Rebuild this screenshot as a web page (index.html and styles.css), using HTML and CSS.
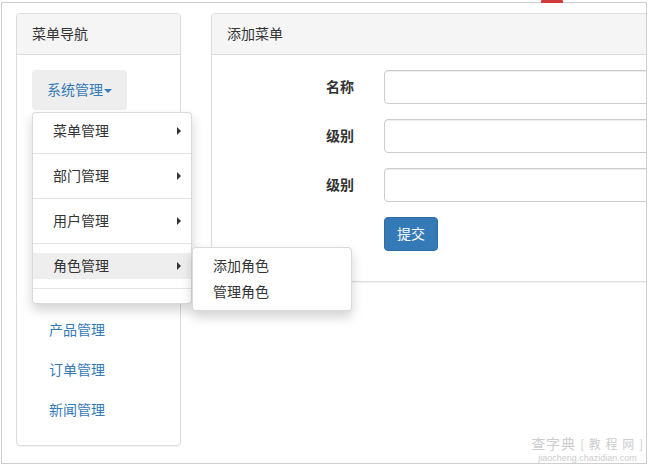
FILE: index.html
```html
<!DOCTYPE html>
<html lang="zh-CN">
<head>
<meta charset="utf-8">
<title>添加菜单</title>
<link rel="stylesheet" href="styles.css">
</head>
<body>
<div class="frame">
  <span class="tab-mark" aria-hidden="true"></span>
  <div class="layout">
    <aside class="panel panel-nav">
      <div class="panel-heading">菜单导航</div>
      <div class="panel-body">
        <ul class="nav">
          <li class="nav-item open">
            <a class="nav-link toggle">系统管理 <span class="caret"></span></a>
            <ul class="dropdown">
              <li class="dd-item"><a>菜单管理</a><span class="caret-right"></span></li>
              <li class="divider"></li>
              <li class="dd-item"><a>部门管理</a><span class="caret-right"></span></li>
              <li class="divider"></li>
              <li class="dd-item"><a>用户管理</a><span class="caret-right"></span></li>
              <li class="divider"></li>
              <li class="dd-item active"><a>角色管理</a><span class="caret-right"></span>
                <ul class="dropdown submenu">
                  <li class="dd-item"><a>添加角色</a></li>
                  <li class="dd-item"><a>管理角色</a></li>
                </ul>
              </li>
              <li class="divider"></li>
            </ul>
          </li>
          <li class="nav-item"><a class="nav-link">产品管理</a></li>
          <li class="nav-item"><a class="nav-link">订单管理</a></li>
          <li class="nav-item"><a class="nav-link">新闻管理</a></li>
        </ul>
      </div>
    </aside>
    <section class="panel panel-main">
      <div class="panel-heading">添加菜单</div>
      <div class="panel-body">
        <form class="form">
          <label class="form-label">名称</label>
          <div class="form-field"><input class="input" type="text"></div>
          <label class="form-label">级别</label>
          <div class="form-field"><input class="input" type="text"></div>
          <label class="form-label">级别</label>
          <div class="form-field"><input class="input" type="text"></div>
          <div></div>
          <div class="form-field"><button class="btn" type="button">提交</button></div>
        </form>
      </div>
    </section>
  </div>
  <div class="watermark" aria-hidden="true">
    <div class="wm-top">查字典<span class="wm-box">[ 教 程 网 ]</span></div>
    <div class="wm-bottom">jiaocheng.chazidian.com</div>
  </div>
</div>
</body>
</html>
```

FILE: styles.css
```css
* { box-sizing: border-box; }
html, body { margin: 0; padding: 0; background: #fff; }
body {
  font-family: "Noto Sans CJK SC", "Liberation Sans", sans-serif;
  font-size: 14px;
  line-height: 20px;
  color: #333;
}
ul { list-style: none; margin: 0; padding: 0; }
a { text-decoration: none; cursor: pointer; }

.frame {
  position: relative;
  margin: 2px 0 0 1px;
  width: 646px;
  height: 462px;
  border: 1px solid #cfcfcf;
}
.tab-mark {
  position: absolute;
  top: -3px;
  left: 539px;
  width: 22px;
  height: 3px;
  background: #d23a3a;
  border-radius: 1px 1px 0 0;
}
.layout {
  display: flex;
  align-items: flex-start;
  gap: 30px;
  padding: 10px 0 0 14px;
  height: 100%;
  overflow: hidden;
}
.panel {
  flex: none;
  border: 1px solid #ddd;
  border-radius: 4px;
  background: #fff;
  box-shadow: 0 1px 1px rgba(0,0,0,.05);
}
.panel-nav { width: 165px; }
.panel-main { width: 500px; }
.panel-heading {
  padding: 9px 15px 11px;
  background: #f5f5f5;
  border-bottom: 1px solid #ddd;
  border-radius: 3px 3px 0 0;
  color: #333;
}
.panel-body { padding: 15px; }

/* nav */
.nav-link {
  display: block;
  padding: 9px 15px 11px 17px;
  color: #337ab7;
}
.toggle {
  display: inline-block;
  padding: 9px 15px 11px;
  background: #eee;
  border-radius: 4px;
}
.caret {
  display: inline-block;
  width: 0;
  height: 0;
  margin-left: -2px;
  vertical-align: middle;
  border-top: 4px solid #337ab7;
  border-left: 4px solid transparent;
  border-right: 4px solid transparent;
}
.dropdown {
  position: relative;
  width: 160px;
  margin: 2px 0 6px;
  padding: 5px 0;
  background: #fff;
  border: 1px solid rgba(0,0,0,.15);
  border-radius: 4px;
  box-shadow: 0 6px 12px rgba(0,0,0,.175);
  z-index: 2;
}
.dd-item { position: relative; }
.dd-item > a {
  display: block;
  padding: 2px 20px 4px;
  color: #333;
  white-space: nowrap;
}
.dd-item.active > a { background: #eee; }
.caret-right {
  position: absolute;
  right: 10px;
  top: 9px;
  width: 0;
  height: 0;
  border-left: 4px solid #333;
  border-top: 4px solid transparent;
  border-bottom: 4px solid transparent;
}
.divider {
  height: 1px;
  margin: 9px 0;
  background: #e5e5e5;
}
.submenu {
  position: absolute;
  top: -6px;
  left: calc(100% + 1px);
  margin: 0;
  z-index: 3;
}

/* form */
.form {
  display: grid;
  grid-template-columns: 142px 1fr;
  row-gap: 15px;
  margin: 0;
  padding-bottom: 15px;
}
.form-label {
  padding: 6px 15px 0 0;
  text-align: right;
  font-weight: bold;
  color: #333;
}
.form-field { padding-left: 15px; }
.input {
  display: block;
  width: 100%;
  height: 34px;
  padding: 6px 12px;
  border: 1px solid #ccc;
  border-radius: 4px;
  box-shadow: inset 0 1px 1px rgba(0,0,0,.075);
  font: inherit;
}
.btn {
  display: inline-block;
  height: 34px;
  padding: 5px 12px 7px;
  font: inherit;
  color: #fff;
  background: #337ab7;
  border: 1px solid #2e6da4;
  border-radius: 4px;
}

/* watermark */
.watermark {
  position: absolute;
  right: 2px;
  bottom: 0;
  text-align: center;
  color: #cdcdcd;
}
.wm-top {
  font-size: 14px;
  line-height: 19px;
  letter-spacing: 1px;
  white-space: nowrap;
}
.wm-box { margin-left: 4px; font-size: 12px; }
.wm-bottom {
  font-family: "Liberation Sans", sans-serif;
  font-size: 9px;
  line-height: 10px;
}
```
